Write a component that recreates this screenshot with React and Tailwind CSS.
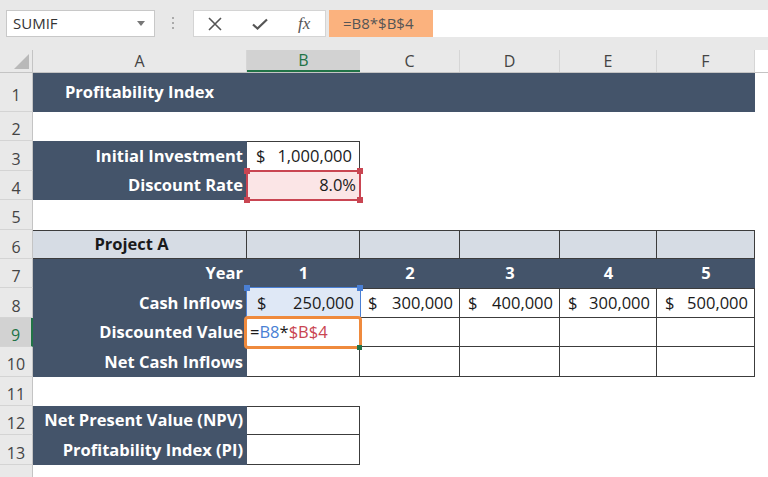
import React from 'react';

const NAVY = 'bg-[#44546a]';
const LINE = 'border-[#3c3c3c]';

function RowNum({ n, h, selected }) {
    return (
        <div
            className={`w-[33px] shrink-0 flex items-center justify-center border-b border-[#d4d4d4] text-[16px] ${selected
                ? 'bg-[#d2d2d2] text-[#217346] border-r-2 border-r-[#217346]'
                : 'bg-[#e9e9e9] text-[#444] border-r border-r-[#c4c4c4]'
                }`}
            style={{ height: h }}
        >
            <span className="pt-[6px]">{n}</span>
        </div>
    );
}

function Row({ n, h = 29.42, selected, children }) {
    return (
        <div className="flex" style={{ height: h }}>
            <RowNum n={n} h={h} selected={selected} />
            {children}
        </div>
    );
}

function Label({ children, w = 'w-[214px]' }) {
    return (
        <div className={`${w} shrink-0 h-full ${NAVY} text-white font-bold flex items-center justify-end pr-[4px] whitespace-nowrap`}>
            {children}
        </div>
    );
}

function Money({ amount, className = '' }) {
    return (
        <div className={`flex items-center justify-between px-[8px] h-full ${className}`}>
            <span>$</span>
            <span>{amount}</span>
        </div>
    );
}

function Handle({ pos, color }) {
    return <span className={`absolute w-[6px] h-[6px] ${color} ${pos}`} />;
}

export default function App() {
    const widths = ['w-[113px]', 'w-[100px]', 'w-[100px]', 'w-[97px]', 'w-[98px]'];
    const letters = ['B', 'C', 'D', 'E', 'F'];

    return (
        <div className="w-[768px] h-[477px] overflow-hidden bg-white text-[#1a1a1a] text-[16.5px]" style={{ fontFamily: '"Open Sans", "Liberation Sans", sans-serif' }}>
            {/* Formula bar */}
            <div className="h-[50px] bg-[#e8e8e8] flex items-start pt-[10px]">
                <div className="ml-[6px] w-[149px] h-[27px] bg-white border border-[#c8c8c8] flex items-center justify-between pl-[6px] pr-[9px]">
                    <span className="text-[15px] text-[#333]">SUMIF</span>
                    <svg width="8" height="5" viewBox="0 0 8 5"><path d="M0 0h8L4 5z" fill="#777" /></svg>
                </div>
                <div className="ml-[17px] mt-[7px] flex flex-col gap-[3px]">
                    <span className="w-[2px] h-[2px] bg-[#aaa]" />
                    <span className="w-[2px] h-[2px] bg-[#aaa]" />
                    <span className="w-[2px] h-[2px] bg-[#aaa]" />
                </div>
                <div className="ml-[19px] w-[133px] h-[27px] bg-white border border-[#d4d4d4] flex items-center">
                    <svg className="ml-[14px]" width="14" height="14" viewBox="0 0 14 14">
                        <path d="M1 1L13 13M13 1L1 13" stroke="#555" strokeWidth="1.6" />
                    </svg>
                    <svg className="ml-[30px]" width="16" height="12" viewBox="0 0 16 12">
                        <path d="M1 6.5L5.5 10.5L15 1.5" stroke="#555" strokeWidth="2.2" fill="none" />
                    </svg>
                    <span className="ml-[30px] italic text-[#555] text-[17px]" style={{ fontFamily: '"Liberation Serif", serif' }}>fx</span>
                </div>
                <div className="ml-[3px] w-[104px] h-[27px] bg-[#fbb27e] flex items-center pl-[14px] text-[15px] text-[#555]">
                    =B8*$B$4
                </div>
                <div className="flex-1 h-[27px] bg-white" />
            </div>

            {/* Column headers */}
            <div className="flex h-[23px] bg-[#e9e9e9] border-b border-[#c4c4c4] text-[16px]">
                <div className="w-[33px] shrink-0 relative border-r border-[#c4c4c4]">
                    <svg className="absolute right-[3px] bottom-[3px]" width="15" height="15" viewBox="0 0 15 15">
                        <path d="M15 0V15H0z" fill="#b9b9b9" />
                    </svg>
                </div>
                <div className="w-[214px] shrink-0 flex items-center justify-center text-[#444] border-r border-[#d6d6d6]">A</div>
                {letters.map((l, i) => (
                    <div
                        key={l}
                        className={`${widths[i]} shrink-0 flex items-center justify-center ${l === 'B'
                            ? 'bg-[#d2d2d2] text-[#217346] border-b-2 border-[#217346]'
                            : 'text-[#444] border-r border-[#d6d6d6]'
                            }`}
                    >
                        {l}
                    </div>
                ))}
                <div className="flex-1 bg-white" />
            </div>

            {/* Row 1 */}
            <Row n={1} h={39}>
                <div className={`w-[722px] ${NAVY} text-white font-bold flex items-center pl-[32px]`}>Profitability Index</div>
            </Row>
            <Row n={2} />
            <Row n={3}>
                <Label>Initial Investment</Label>
                <Money amount="1,000,000" className={`w-[113px] border-t border-r ${LINE} !pl-[9px] !pr-[7px]`} />
            </Row>
            <Row n={4}>
                <Label>Discount Rate</Label>
                <div className="w-[113px] h-full relative bg-[#fbe5e6] flex items-center justify-end pr-[4px]">
                    8.0%
                    <span className="absolute -inset-px border-2 border-[#c94552]" />
                    <Handle pos="-left-[3px] -top-[3px]" color="bg-[#c94552]" />
                    <Handle pos="-right-[3px] -top-[3px]" color="bg-[#c94552]" />
                    <Handle pos="-left-[3px] -bottom-[3px]" color="bg-[#c94552]" />
                    <Handle pos="-right-[3px] -bottom-[3px]" color="bg-[#c94552]" />
                </div>
            </Row>
            <Row n={5} />
            <Row n={6}>
                <div className={`w-[214px] h-full bg-[#d6dce4] border-t border-b border-r ${LINE} flex items-center justify-center pr-[16px] font-bold`}>Project A</div>
                {widths.map((w, i) => (
                    <div key={i} className={`${w} h-full bg-[#d6dce4] border-t border-b border-r ${LINE}`} />
                ))}
            </Row>
            <Row n={7}>
                <Label>Year</Label>
                {widths.map((w, i) => (
                    <div key={i} className={`${w} h-full ${NAVY} text-white font-bold flex items-center justify-center`}>{i + 1}</div>
                ))}
            </Row>
            <Row n={8}>
                <Label>Cash Inflows</Label>
                <div className="w-[113px] h-full relative bg-[#dfe8f6]">
                    <Money amount="250,000" className="!pl-[10px] !pr-[6px]" />
                    <span className="absolute -inset-px border border-[#4a7fd4]" />
                    <Handle pos="-left-[3px] -top-[3px]" color="bg-[#4a7fd4]" />
                    <Handle pos="-right-[3px] -top-[3px]" color="bg-[#4a7fd4]" />
                </div>
                {['300,000', '400,000', '300,000', '500,000'].map((a, i) => (
                    <Money key={i} amount={a} className={`${widths[i + 1]} border-t border-b border-r ${LINE} !pl-[8px] !pr-[6px]`} />
                ))}
            </Row>
            <Row n={9} selected>
                <Label>Discounted Value</Label>
                <div className={`w-[113px] h-full relative border-b border-r ${LINE} flex items-center pl-[3px]`}>
                    <span>=</span>
                    <span className="text-[#4a7fd4]">B8</span>
                    <span>*</span>
                    <span className="text-[#c94552]">$B$4</span>
                    <span className="absolute -left-[3px] -top-[2px] -right-[3px] -bottom-[3px] border-[3px] border-[#ef8a3d] rounded-[4px]" />
                    <span className="absolute -right-[3px] -bottom-[4px] w-[5px] h-[5px] bg-[#217346]" />
                </div>
                {widths.slice(1).map((w, i) => (
                    <div key={i} className={`${w} h-full border-b border-r ${LINE}`} />
                ))}
            </Row>
            <Row n={10}>
                <Label>Net Cash Inflows</Label>
                {widths.map((w, i) => (
                    <div key={i} className={`${w} h-full border-b border-r ${LINE}`} />
                ))}
            </Row>
            <Row n={11} />
            <Row n={12}>
                <Label>Net Present Value (NPV)</Label>
                <div className={`w-[113px] h-full border-t border-b border-r ${LINE}`} />
            </Row>
            <Row n={13}>
                <Label>Profitability Index (PI)</Label>
                <div className={`w-[113px] h-full border-b border-r ${LINE}`} />
            </Row>
            <Row n="" h={20} />
        </div>
    );
}
